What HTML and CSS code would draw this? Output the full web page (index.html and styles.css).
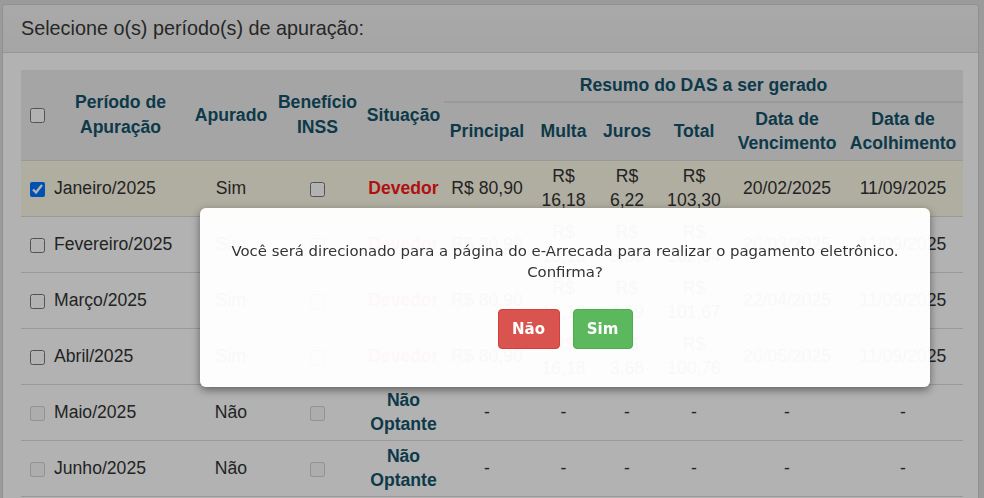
FILE: index.html
```html
<!DOCTYPE html>
<html lang="pt-BR">
<head>
<meta charset="utf-8">
<title>Selecione o(s) período(s) de apuração</title>
<link rel="stylesheet" href="styles.css">
</head>
<body>
<div class="page">
  <section class="panel">
    <header class="panel-heading">Selecione o(s) período(s) de apuração:</header>
    <div class="panel-body">
      <table class="periods">
        <colgroup>
          <col class="c-chk"><col class="c-per"><col class="c-apu"><col class="c-ben"><col class="c-sit">
          <col class="c-pri"><col class="c-mul"><col class="c-jur"><col class="c-tot"><col class="c-ven"><col class="c-aco">
        </colgroup>
        <thead>
          <tr>
            <th rowspan="2" class="chk-cell"><input type="checkbox" class="chk"></th>
            <th rowspan="2">Período de Apuração</th>
            <th rowspan="2">Apurado</th>
            <th rowspan="2">Benefício INSS</th>
            <th rowspan="2">Situação</th>
            <th colspan="6" class="group">Resumo do DAS a ser gerado</th>
          </tr>
          <tr class="sub">
            <th>Principal</th>
            <th>Multa</th>
            <th>Juros</th>
            <th>Total</th>
            <th>Data de Vencimento</th>
            <th>Data de Acolhimento</th>
          </tr>
        </thead>
        <tbody>
          <tr class="selected">
            <td class="chk-cell"><input type="checkbox" class="chk" checked></td>
            <td class="per">Janeiro/2025</td>
            <td>Sim</td>
            <td><input type="checkbox" class="chk"></td>
            <td class="devedor">Devedor</td>
            <td>R$ 80,90</td>
            <td>R$ 16,18</td>
            <td>R$ 6,22</td>
            <td>R$ 103,30</td>
            <td>20/02/2025</td>
            <td>11/09/2025</td>
          </tr>
          <tr>
            <td class="chk-cell"><input type="checkbox" class="chk"></td>
            <td class="per">Fevereiro/2025</td>
            <td>Sim</td>
            <td><input type="checkbox" class="chk"></td>
            <td class="devedor">Devedor</td>
            <td>R$ 80,90</td>
            <td>R$ 16,18</td>
            <td>R$ 5,56</td>
            <td>R$ 102,64</td>
            <td>20/03/2025</td>
            <td>11/09/2025</td>
          </tr>
          <tr>
            <td class="chk-cell"><input type="checkbox" class="chk"></td>
            <td class="per">Março/2025</td>
            <td>Sim</td>
            <td><input type="checkbox" class="chk"></td>
            <td class="devedor">Devedor</td>
            <td>R$ 80,90</td>
            <td>R$ 16,18</td>
            <td>R$ 4,59</td>
            <td>R$ 101,67</td>
            <td>22/04/2025</td>
            <td>11/09/2025</td>
          </tr>
          <tr>
            <td class="chk-cell"><input type="checkbox" class="chk"></td>
            <td class="per">Abril/2025</td>
            <td>Sim</td>
            <td><input type="checkbox" class="chk"></td>
            <td class="devedor">Devedor</td>
            <td>R$ 80,90</td>
            <td>R$ 16,18</td>
            <td>R$ 3,68</td>
            <td>R$ 100,76</td>
            <td>20/05/2025</td>
            <td>11/09/2025</td>
          </tr>
          <tr>
            <td class="chk-cell"><input type="checkbox" class="chk" disabled></td>
            <td class="per">Maio/2025</td>
            <td>Não</td>
            <td><input type="checkbox" class="chk" disabled></td>
            <td class="optante">Não Optante</td>
            <td>-</td>
            <td>-</td>
            <td>-</td>
            <td>-</td>
            <td>-</td>
            <td>-</td>
          </tr>
          <tr>
            <td class="chk-cell"><input type="checkbox" class="chk" disabled></td>
            <td class="per">Junho/2025</td>
            <td>Não</td>
            <td><input type="checkbox" class="chk" disabled></td>
            <td class="optante">Não Optante</td>
            <td>-</td>
            <td>-</td>
            <td>-</td>
            <td>-</td>
            <td>-</td>
            <td>-</td>
          </tr>
        </tbody>
      </table>
    </div>
  </section>
</div>

<div class="backdrop"></div>
<div class="modal" role="dialog">
  <p class="modal-text">
    <span class="line">Você será direcionado para a página do e-Arrecada para realizar o pagamento eletrônico.</span>
    <span class="line">Confirma?</span>
  </p>
  <div class="modal-actions">
    <button class="btn btn-danger">Não</button>
    <button class="btn btn-success">Sim</button>
  </div>
</div>
</body>
</html>
```

FILE: styles.css
```css
html, body {
  margin: 0;
  padding: 0;
}

body {
  background: #dedede;
  font-family: "Liberation Sans", Arial, sans-serif;
  color: #333;
  overflow: hidden;
}

.page {
  padding: 4px 5px 0 2px;
}

.panel {
  background: #fff;
  border: 1px solid #cfcfcf;
  border-bottom: 0;
  border-radius: 4px 4px 0 0;
}

.panel-heading {
  height: 47px;
  display: flex;
  align-items: center;
  padding: 0 18px;
  font-size: 19.8px;
  color: #383838;
  background: linear-gradient(#f3f3f3, #ececec);
  border-bottom: 1px solid #d6d6d6;
  border-radius: 4px 4px 0 0;
}

.panel-body {
  padding: 17px 15px 2px 18px;
}

.periods {
  width: 942px;
  table-layout: fixed;
  border-collapse: collapse;
  font-size: 17.6px;
  line-height: 24.5px;
}

.c-chk { width: 30px; }
.c-per { width: 139px; }
.c-apu { width: 82px; }
.c-ben { width: 91px; }
.c-sit { width: 81px; }
.c-pri { width: 86px; }
.c-mul { width: 67px; }
.c-jur { width: 60px; }
.c-tot { width: 74px; }
.c-ven { width: 112px; }
.c-aco { width: 120px; }

.periods thead {
  background: #ececec;
}

.periods th {
  color: #13536a;
  font-weight: bold;
  text-align: center;
  vertical-align: middle;
  padding: 3px;
}

.periods th.group {
  border-bottom: 2px solid #dcdcdc;
}

.periods tr.sub th {
  padding: 4px 3px 4px;
}

.periods td {
  text-align: center;
  vertical-align: middle;
  padding: 3px;
  border-top: 1px solid #dcdcdc;
  color: #333;
}

.periods tbody tr:last-child td {
  border-bottom: 1px solid #dcdcdc;
}

.periods td.per {
  text-align: left;
}

.periods .chk-cell {
  text-align: left;
  padding: 3px 0 3px 9px;
}

.chk {
  width: 15px;
  height: 15px;
  margin: 0;
  vertical-align: middle;
}

.periods tr.selected td {
  background: #fdf9e6;
}

.devedor {
  color: #fb1818 !important;
  font-weight: bold;
}

.optante {
  color: #13536a !important;
  font-weight: bold;
}

.backdrop {
  position: fixed;
  inset: 0;
  background: rgba(0, 0, 0, 0.3);
}

.modal {
  position: fixed;
  top: 208px;
  left: 200px;
  width: 730px;
  box-sizing: border-box;
  padding: 33px 10px 38px;
  background: rgba(255, 255, 255, 0.97);
  border-radius: 6px;
  box-shadow: 0 3px 9px rgba(0, 0, 0, 0.45);
  text-align: center;
  font-family: "DejaVu Sans", Verdana, sans-serif;
}

.modal-text {
  margin: 0;
  font-size: 14.9px;
  line-height: 21px;
  color: #333;
}

.modal-text .line {
  display: block;
}

.modal-actions {
  margin-top: 26px;
  display: flex;
  justify-content: center;
  gap: 13px;
}

.btn {
  height: 40px;
  padding: 0 10px;
  border-radius: 4px;
  border: 1px solid transparent;
  font-family: "DejaVu Sans", Verdana, sans-serif;
  font-weight: bold;
  font-size: 15px;
  color: #fff;
}

.btn-danger {
  width: 62px;
  background: #d9534f;
  border-color: #d43f3a;
}

.btn-success {
  width: 60px;
  background: #5cb85c;
  border-color: #4cae4c;
}
```
